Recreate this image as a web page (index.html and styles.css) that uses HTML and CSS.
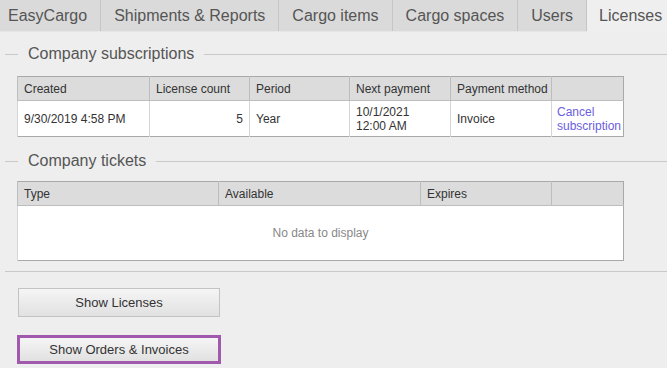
FILE: index.html
```html
<!DOCTYPE html>
<html lang="en">
<head>
  <meta charset="UTF-8">
  <title>EasyCargo - Licenses</title>
  <link rel="stylesheet" href="styles.css">
</head>
<body>
  <!-- Tabs -->
  <nav class="tabs">
    <div class="tab first">EasyCargo</div>
    <div class="tab">Shipments &amp; Reports</div>
    <div class="tab">Cargo items</div>
    <div class="tab">Cargo spaces</div>
    <div class="tab">Users</div>
    <div class="tab active">Licenses</div>
  </nav>

  <main class="content">
    <!-- Company subscriptions -->
    <div class="legend"><span class="legend-line short"></span><span class="legend-text">Company subscriptions</span><span class="legend-line"></span></div>
    <table class="grid subs">
      <colgroup>
        <col style="width:132px"><col style="width:100px"><col style="width:100px">
        <col style="width:101px"><col style="width:101px"><col style="width:72px">
      </colgroup>
      <thead>
        <tr><th>Created</th><th>License count</th><th>Period</th><th>Next payment</th><th>Payment method</th><th></th></tr>
      </thead>
      <tbody>
        <tr>
          <td>9/30/2019 4:58 PM</td>
          <td class="num">5</td>
          <td>Year</td>
          <td>10/1/2021<br>12:00 AM</td>
          <td>Invoice</td>
          <td class="link-cell"><a href="#">Cancel<br>subscription</a></td>
        </tr>
      </tbody>
    </table>

    <!-- Company tickets -->
    <div class="legend second"><span class="legend-line short"></span><span class="legend-text">Company tickets</span><span class="legend-line"></span></div>
    <table class="grid tickets">
      <colgroup>
        <col style="width:201px"><col style="width:202px"><col style="width:131px"><col style="width:72px">
      </colgroup>
      <thead>
        <tr><th>Type</th><th>Available</th><th>Expires</th><th></th></tr>
      </thead>
      <tbody>
        <tr><td colspan="4" class="empty">No data to display</td></tr>
      </tbody>
    </table>

    <hr class="separator">

    <div class="actions">
      <button class="btn">Show Licenses</button>
      <button class="btn focused">Show Orders &amp; Invoices</button>
    </div>
  </main>
</body>
</html>
```

FILE: styles.css
```css
/* General Styles */
body {
  margin: 0;
  background: #eeeeee;
  font-family: "Liberation Sans", Arial, sans-serif;
  color: #555;
  overflow: hidden;
}

/* Tabs */
.tabs {
  display: flex;
  height: 32px;
  background: #dadada;
  border-bottom: 1px solid #e6e6e6;
  box-sizing: border-box;
}
.tab {
  font-size: 16px;
  line-height: 32px;
  padding: 0 13px;
  background: #dadada;
  border-right: 1px solid #c6c6c6;
  white-space: nowrap;
}
.tab.first {
  padding-left: 8px;
  padding-right: 13px;
}
.tab.active {
  flex: 1;
  padding-left: 12px;
  background: #efefef;
  border-right: none;
  margin-bottom: -1px;
}

/* Legends */
.legend {
  display: flex;
  align-items: center;
  height: 20px;
  margin-top: 12px;
}
.legend.second {
  margin-top: 14px;
}
.legend-line {
  flex: 1;
  height: 1px;
  background: #c9c9c9;
}
.legend-line.short {
  flex: none;
  width: 13px;
  margin-left: 5px;
}
.legend-text {
  font-size: 16px;
  color: #555;
  padding: 0 10px;
}

/* Tables */
.grid {
  margin-left: 17px;
  width: 606px;
  table-layout: fixed;
  border-collapse: collapse;
  border: 1px solid #a9a9a9;
  font-size: 12px;
  color: #333;
}
.subs {
  margin-top: 12px;
}
.tickets {
  margin-top: 10px;
}
.grid th {
  background: #dcdcdc;
  font-weight: normal;
  text-align: left;
  height: 23px;
  padding: 0 6px;
  border-left: 1px solid #bdbdbd;
  border-bottom: 1px solid #bdbdbd;
  white-space: nowrap;
}
.grid td {
  background: #fff;
  height: 35px;
  padding: 0 6px;
  border-left: 1px solid #d6d6d6;
  line-height: 14px;
  white-space: nowrap;
}
.grid td.num {
  text-align: right;
}
.grid td.link-cell {
  padding-left: 5px;
  padding-right: 0;
  overflow: visible;
}
.grid a {
  color: #6a5ee0;
  text-decoration: none;
}
.grid td.empty {
  height: 54px;
  text-align: center;
  color: #888;
}

/* Separator and buttons */
.separator {
  border: none;
  height: 1px;
  background: #c9c9c9;
  margin: 10px 0 0 5px;
}
.actions {
  display: flex;
  flex-direction: column;
  gap: 18px;
  padding: 16px 0 0 18px;
}
.btn {
  width: 202px;
  height: 29px;
  font-family: "Liberation Sans", Arial, sans-serif;
  font-size: 13px;
  color: #333;
  background: linear-gradient(#f5f5f5, #e1e1e1);
  border: 1px solid #c3c3c3;
  padding: 0;
}
.btn.focused {
  width: 204px;
  margin-left: -1px;
  border: 3px solid #a159ad;
}
```
